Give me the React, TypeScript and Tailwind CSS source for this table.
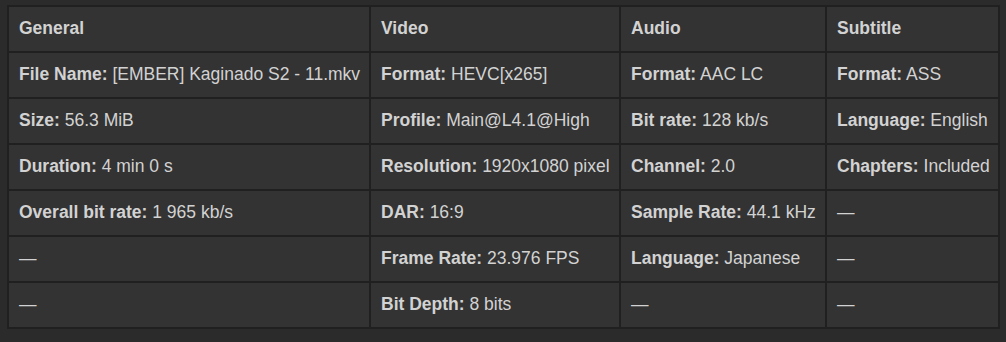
type Field = { label: string; value: string } | null;

const headers = ["General", "Video", "Audio", "Subtitle"];

// each row lists the four columns: general, video, audio, subtitle
const rows: Field[][] = [
  [
    { label: "File Name:", value: "[EMBER] Kaginado S2 - 11.mkv" },
    { label: "Format:", value: "HEVC[x265]" },
    { label: "Format:", value: "AAC LC" },
    { label: "Format:", value: "ASS" },
  ],
  [
    { label: "Size:", value: "56.3 MiB" },
    { label: "Profile:", value: "Main@L4.1@High" },
    { label: "Bit rate:", value: "128 kb/s" },
    { label: "Language:", value: "English" },
  ],
  [
    { label: "Duration:", value: "4 min 0 s" },
    { label: "Resolution:", value: "1920x1080 pixel" },
    { label: "Channel:", value: "2.0" },
    { label: "Chapters:", value: "Included" },
  ],
  [
    { label: "Overall bit rate:", value: "1 965 kb/s" },
    { label: "DAR:", value: "16:9" },
    { label: "Sample Rate:", value: "44.1 kHz" },
    null,
  ],
  [null, { label: "Frame Rate:", value: "23.976 FPS" }, { label: "Language:", value: "Japanese" }, null],
  [null, { label: "Bit Depth:", value: "8 bits" }, null, null],
];

const cell =
  "h-[46px] border border-[#202020] bg-[#333333] px-[10px] pt-0 pb-[2px] text-left align-middle whitespace-nowrap font-[family-name:'Liberation_Sans',Arial,sans-serif] text-[17.5px] text-[#d2d2d2]";

export default function App() {
  return (
    <div className="min-h-[342px] w-[1006px] bg-[#2b2b2b] pl-[7px] pt-[5px]">
      <table className="w-[993px] table-fixed border-separate border-spacing-0 border border-[#202020]">
        <colgroup>
          <col className="w-[362px]" />
          <col className="w-[250px]" />
          <col className="w-[206px]" />
          <col className="w-[173px]" />
        </colgroup>
        <thead>
          <tr>
            {headers.map((h) => (
              <th key={h} className={`${cell} font-bold`}>
                {h}
              </th>
            ))}
          </tr>
        </thead>
        <tbody>
          {rows.map((row, i) => (
            <tr key={i}>
              {row.map((f, j) => (
                <td key={j} className={cell}>
                  {f ? (
                    <>
                      <span className="font-bold">{f.label}</span> {f.value}
                    </>
                  ) : (
                    "—"
                  )}
                </td>
              ))}
            </tr>
          ))}
        </tbody>
      </table>
    </div>
  );
}
